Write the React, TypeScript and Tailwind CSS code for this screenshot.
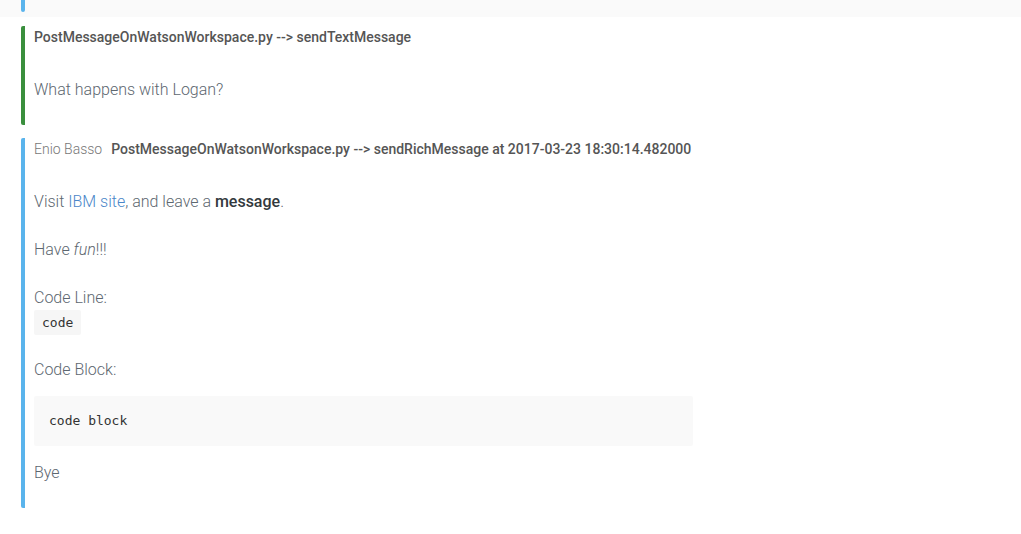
import React from "react";

const sans = { fontFamily: 'Roboto, "Liberation Sans", Arial, sans-serif' };

export default function App() {
  return (
    <div className="min-h-[534px] w-full bg-white" style={sans}>
      {/* previous message tail */}
      <div className="h-[17px] w-full bg-[#fafafa] pl-[21px]">
        <div className="h-[12px] w-[4px] rounded-b-[2px] bg-[#5ab4ec]" />
      </div>

      {/* message 1 */}
      <div className="mt-[9px] pl-[21px]">
        <div className="flex border-l-4 border-[#3a8f3d] rounded-[2px] pl-[9px] pb-[23px] pt-[1px]">
          <div>
            <div className="h-[20px] leading-[20px] text-[14px] font-medium text-[#555]">
              PostMessageOnWatsonWorkspace.py --&gt; sendTextMessage
            </div>
            <p className="mt-[31px] h-[24px] leading-[24px] text-[16px] font-light text-[#5d6770]">
              What happens with Logan?
            </p>
          </div>
        </div>
      </div>

      {/* message 2 */}
      <div className="mt-[13px] pl-[21px]">
        <div className="border-l-4 border-[#5ab4ec] rounded-[2px] pl-[9px] pb-[23px] pt-[1px] text-[16px] font-light text-[#5d6770]">
          <div className="flex h-[20px] items-center leading-[20px]">
            <span className="text-[14px] font-light text-[#777]">Enio Basso</span>
            <span className="ml-[9px] text-[14px] font-medium text-[#555]">
              PostMessageOnWatsonWorkspace.py --&gt; sendRichMessage at 2017-03-23 18:30:14.482000
            </span>
          </div>
          <p className="mt-[31px] leading-[24px]">
            Visit <a className="text-[#4a86c8]">IBM site</a>, and leave a{" "}
            <strong className="font-medium text-[#33393d]">message</strong>.
          </p>
          <p className="mt-[24px] leading-[24px]">
            Have <em className="italic">fun</em>!!!
          </p>
          <p className="mt-[24px] leading-[24px]">Code Line:</p>
          <div className="mt-0">
            <code
              className="inline-block h-[25px] rounded-[2px] bg-[#f6f6f6] px-[8px] text-[13px] font-normal leading-[25px] text-[#333]"
              style={{ fontFamily: '"DejaVu Sans Mono", monospace' }}
            >
              code
            </code>
          </div>
          <p className="mt-[23px] leading-[24px]">Code Block:</p>
          <pre
            className="mt-[14px] h-[50px] w-[659px] rounded-[2px] bg-[#f9f9f9] px-[15px] text-[13px] font-normal leading-[50px] text-[#333]"
            style={{ fontFamily: '"DejaVu Sans Mono", monospace' }}
          >
            code block
          </pre>
          <p className="mt-[15px] leading-[24px]">Bye</p>
        </div>
      </div>
    </div>
  );
}
